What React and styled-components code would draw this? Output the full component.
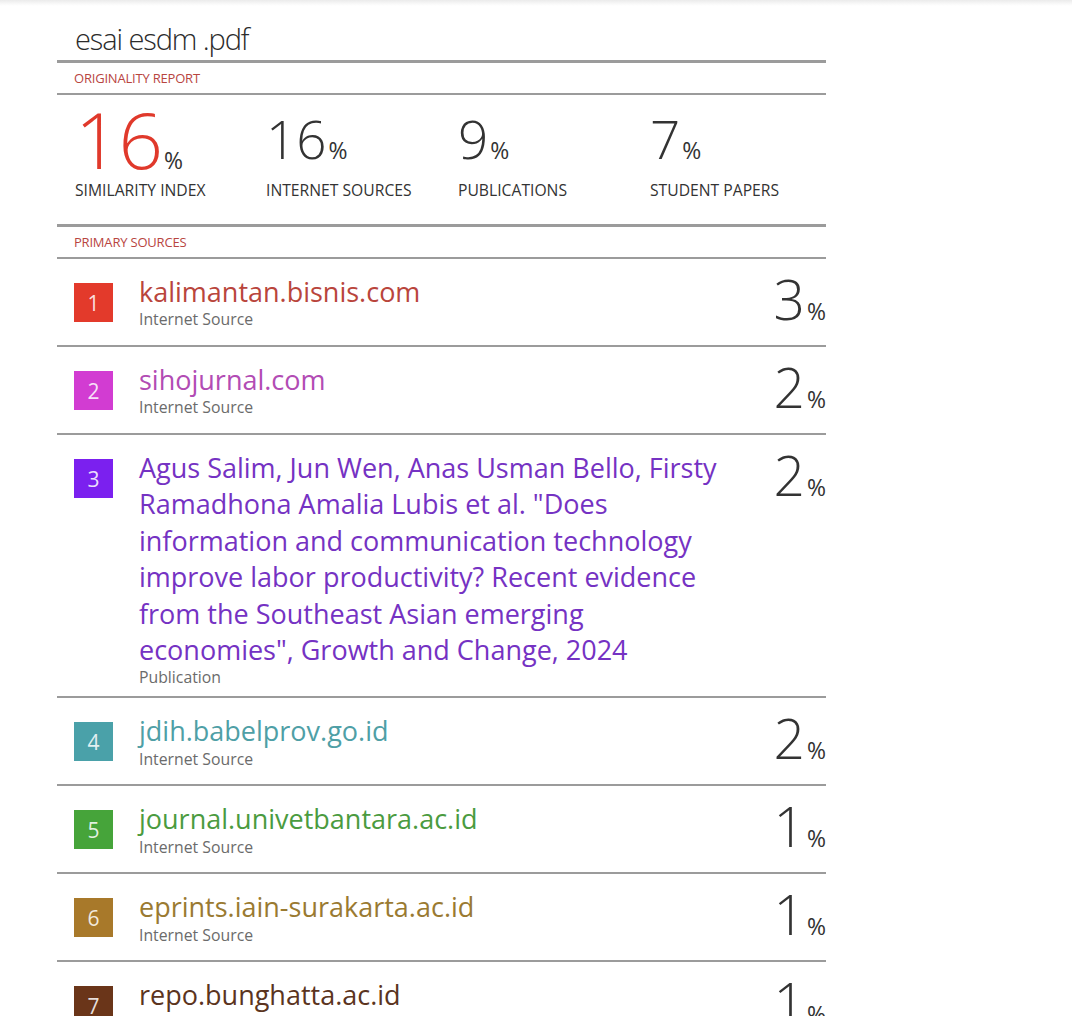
import React from 'react'
import styled, { createGlobalStyle } from 'styled-components'

const GlobalStyle = createGlobalStyle`
  body {
    margin: 0;
    background: #fff;
    font-family: "Open Sans", "Liberation Sans", sans-serif;
    color: #333;
  }
`

const stats = [
  { value: '16', label: 'SIMILARITY INDEX', main: true },
  { value: '16', label: 'INTERNET SOURCES' },
  { value: '9', label: 'PUBLICATIONS' },
  { value: '7', label: 'STUDENT PAPERS' },
]

const sources = [
  { n: 1, title: 'kalimantan.bisnis.com', type: 'Internet Source', pct: 3, badge: '#e33a2b', color: '#b9453c' },
  { n: 2, title: 'sihojurnal.com', type: 'Internet Source', pct: 2, badge: '#d23cd2', color: '#b24cb4' },
  {
    n: 3,
    title:
      'Agus Salim, Jun Wen, Anas Usman Bello, Firsty Ramadhona Amalia Lubis et al. "Does information and communication technology improve labor productivity? Recent evidence from the Southeast Asian emerging economies", Growth and Change, 2024',
    type: 'Publication',
    pct: 2,
    badge: '#7b20ef',
    color: '#7532c3',
  },
  { n: 4, title: 'jdih.babelprov.go.id', type: 'Internet Source', pct: 2, badge: '#4aa1a9', color: '#4f9fa6' },
  { n: 5, title: 'journal.univetbantara.ac.id', type: 'Internet Source', pct: 1, badge: '#46a43a', color: '#4b9b3f' },
  { n: 6, title: 'eprints.iain-surakarta.ac.id', type: 'Internet Source', pct: 1, badge: '#a8792a', color: '#9a7a31' },
  { n: 7, title: 'repo.bunghatta.ac.id', type: 'Internet Source', pct: 1, badge: '#6a3519', color: '#5b3420' },
]

export default function App() {
  return (
    <>
      <GlobalStyle />
      <TopShade />
      <Report>
        <DocTitle>esai esdm .pdf</DocTitle>
        <Rule thick />
        <SectionLabel>ORIGINALITY REPORT</SectionLabel>
        <Rule />
        <StatsRow>
          {stats.map((s) => (
            <Stat key={s.label}>
              <StatValue main={s.main}>
                {s.value}
                <Percent>%</Percent>
              </StatValue>
              <StatLabel>{s.label}</StatLabel>
            </Stat>
          ))}
        </StatsRow>
        <Rule thick />
        <SectionLabel>PRIMARY SOURCES</SectionLabel>
        <Rule />
        {sources.map((s) => (
          <SourceRow key={s.n}>
            <Badge bg={s.badge}>{s.n}</Badge>
            <SourceBody>
              <SourceTitle color={s.color}>{s.title}</SourceTitle>
              <SourceType>{s.type}</SourceType>
            </SourceBody>
            <SourcePct>
              {s.pct}
              <Percent>%</Percent>
            </SourcePct>
          </SourceRow>
        ))}
      </Report>
    </>
  )
}

const TopShade = styled.div`
  height: 6px;
  background: linear-gradient(#ebebeb, #fafafa 70%, #fff);
`

const Report = styled.div`
  width: 769px;
  margin-left: 57px;
  padding-top: 15px;
`

const DocTitle = styled.h1`
  margin: 0 0 3px;
  padding-left: 18px;
  font-size: 29px;
  font-weight: 300;
  line-height: 36px;
  letter-spacing: -1.1px;
  color: #2b2b2b;
`

const Rule = styled.div`
  height: ${(p) => (p.thick ? '3px' : '2px')};
  background: #9b9b9b;
`

const SectionLabel = styled.div`
  padding-left: 17px;
  font-size: 13px;
  line-height: 30px;
  letter-spacing: -0.2px;
  color: #b8453f;
`

const StatsRow = styled.div`
  display: grid;
  grid-template-columns: 191px 192px 192px 1fr;
  padding: 5px 0 24px 18px;
`

const Stat = styled.div`
  min-width: 0;
`

const StatValue = styled.div`
  display: flex;
  align-items: baseline;
  height: 78px;
  font-size: ${(p) => (p.main ? '78px' : '53px')};
  line-height: 78px;
  font-weight: 300;
  color: ${(p) => (p.main ? '#e0392b' : '#333')};
  letter-spacing: ${(p) => (p.main ? '-1px' : '0')};
`

const Percent = styled.span`
  font-size: 23px;
  line-height: 24px;
  font-weight: 400;
  color: #333;
  margin-left: 2px;
  letter-spacing: 0;
`

const StatLabel = styled.div`
  margin-top: 2px;
  font-size: 15.7px;
  line-height: 20px;
  color: #333;
`

const SourceRow = styled.div`
  display: flex;
  align-items: flex-start;
  padding: 15px 0 10px 17px;
  border-bottom: 2px solid #9b9b9b;
`

const Badge = styled.div`
  flex: none;
  width: 39px;
  height: 39px;
  margin-top: 9px;
  display: flex;
  align-items: center;
  justify-content: center;
  background: ${(p) => p.bg};
  color: rgba(255, 255, 255, 0.85);
  font-size: 21px;
  font-weight: 400;
`

const SourceBody = styled.div`
  flex: 1;
  margin-left: 26px;
  min-width: 0;
`

const SourceTitle = styled.div`
  font-size: 27px;
  line-height: 36.4px;
  color: ${(p) => p.color};
`

const SourceType = styled.div`
  font-size: 15.8px;
  line-height: 18px;
  color: #6b6b6b;
`

const SourcePct = styled.div`
  flex: none;
  width: 98px;
  height: 61px;
  display: flex;
  align-items: baseline;
  justify-content: flex-end;
  font-size: 55px;
  line-height: 50px;
  font-weight: 300;
  color: #333;
`
